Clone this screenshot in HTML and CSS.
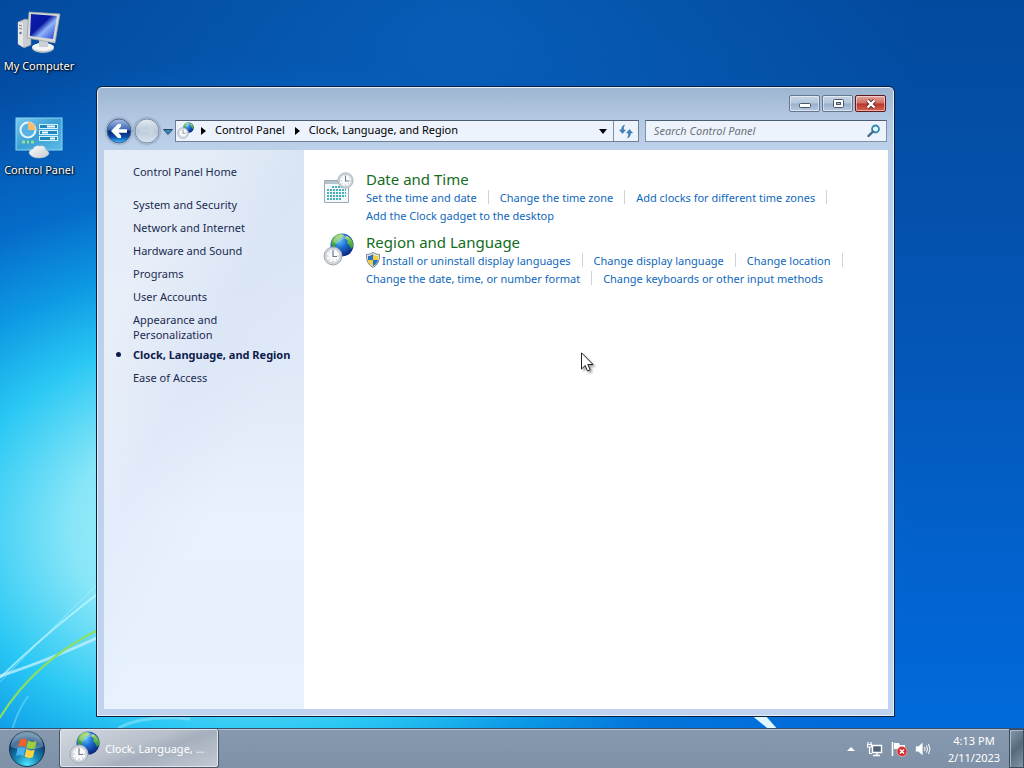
FILE: index.html
```
<!DOCTYPE html>
<html lang="en">
<head>
    <meta charset="UTF-8">
    <meta name="viewport" content="width=device-width, initial-scale=1.0">
    <title>Clock, Language, and Region</title>
    <link rel="stylesheet" href="styles.css">
</head>
<body>
    <!-- shared icons -->
    <svg class="sprite" aria-hidden="true">
        <defs>
            <radialGradient id="sea" cx="38%" cy="30%" r="75%">
                <stop offset="0" stop-color="#63c8fa"/>
                <stop offset="0.45" stop-color="#1c6cd0"/>
                <stop offset="1" stop-color="#0a1f78"/>
            </radialGradient>
            <linearGradient id="land" x1="0" y1="0" x2="0" y2="1">
                <stop offset="0" stop-color="#a4dc5c"/>
                <stop offset="1" stop-color="#1f8e3a"/>
            </linearGradient>
            <linearGradient id="silver" x1="0" y1="0" x2="1" y2="1">
                <stop offset="0" stop-color="#fff"/>
                <stop offset="1" stop-color="#c3cad0"/>
            </linearGradient>
            <linearGradient id="screen" x1="0" y1="0" x2="1" y2="1">
                <stop offset="0" stop-color="#0b1fae"/>
                <stop offset="0.42" stop-color="#0818a0"/>
                <stop offset="0.6" stop-color="#8fb4fa"/>
                <stop offset="1" stop-color="#2138c8"/>
            </linearGradient>
            <linearGradient id="orb-blue" x1="0" y1="0" x2="0" y2="1">
                <stop offset="0" stop-color="#a9bfe6"/>
                <stop offset="0.46" stop-color="#3864b4"/>
                <stop offset="0.5" stop-color="#06256f"/>
                <stop offset="0.75" stop-color="#0b4cae"/>
                <stop offset="1" stop-color="#3cc4ff"/>
            </linearGradient>
            <linearGradient id="orb-grey" x1="0" y1="0" x2="0" y2="1">
                <stop offset="0" stop-color="#e4ebf3"/>
                <stop offset="0.5" stop-color="#b9c7d7"/>
                <stop offset="1" stop-color="#dce6f1"/>
            </linearGradient>
            <linearGradient id="panel" x1="0" y1="0" x2="1" y2="1">
                <stop offset="0" stop-color="#79c9ee"/>
                <stop offset="0.5" stop-color="#3b9fd6"/>
                <stop offset="1" stop-color="#5dbbe4"/>
            </linearGradient>
            <radialGradient id="start" cx="50%" cy="95%" r="85%">
                <stop offset="0" stop-color="#52e6ff"/>
                <stop offset="0.4" stop-color="#1789b8"/>
                <stop offset="0.8" stop-color="#0d4274"/>
                <stop offset="1" stop-color="#49799b"/>
            </radialGradient>
        </defs>
        <symbol id="icon-clock" viewBox="0 0 20 20">
            <circle cx="10" cy="10" r="9" fill="#d3d9de" stroke="#a0a9b0"/>
            <circle cx="10" cy="10" r="7" fill="#f8fafb" stroke="#b4bcc3" stroke-width="0.7"/>
            <path d="M10 4v1.5M10 14.5V16M4 10h1.5M14.5 10H16M5.8 5.8l.8.8M13.4 13.4l.8.8M5.8 14.2l.8-.8" stroke="#98a2aa" stroke-width="0.8"/>
            <path d="M10 4.5V10.5H14" fill="none" stroke="#6c7a88" stroke-width="1.2"/>
        </symbol>
        <symbol id="icon-globe" viewBox="0 0 24 24">
            <circle cx="12" cy="12" r="11.5" fill="url(#sea)"/>
            <path d="M2 7Q5 1 11 1L14 2L12 5L9 5.5L9 8L6 10L6 13L4 15Q0 11 2 7Z" fill="url(#land)"/>
            <path d="M17 3L20 5Q24 9 23 14L21 16L19 12L17 10L18 8L15 5Z" fill="url(#land)"/>
            <path d="M3 8Q6 2 12 2Q17 2 19 5Q12 5 6 11Z" fill="#fff" opacity="0.3"/>
        </symbol>
        <symbol id="icon-region" viewBox="0 0 32 34">
            <use href="#icon-globe" x="7" y="0" width="24" height="24"/>
            <use href="#icon-clock" x="0" y="13" width="20" height="20"/>
        </symbol>
    </svg>

    <main class="desktop">
        <svg class="wallpaper" viewBox="0 0 1024 768" preserveAspectRatio="none" aria-hidden="true">
            <g fill="none">
                <path d="M0 678Q40 638 100 592" stroke="#c8f6ff" stroke-width="2" opacity="0.7"/>
                <path d="M0 682Q50 630 110 572" stroke="#b4f2ff" stroke-width="1" opacity="0.6"/>
                <path d="M0 676Q50 660 110 632" stroke="#d0f4ff" stroke-width="3" opacity="0.7"/>
                <path d="M-4 724Q32 662 100 629" stroke="#8be060" stroke-width="2"/>
                <path d="M10 740Q14 716 28 696" stroke="#9ceaff" stroke-width="2" opacity="0.4"/>
                <path d="M118 728Q145 714 190 719" stroke="#8be3f8" stroke-width="3" opacity="0.6"/>
            </g>
            <path d="M750 714L764 714L780 732L772 732Z" fill="#e0f7ff"/>
        </svg>

        <nav class="shortcuts">
            <a class="shortcut" href="#">
                <svg width="48" height="48" viewBox="0 0 48 48">
                    <path d="M3 14L10 11L16 12V37L9 40L3 36Z" fill="#c9ced2" stroke="#858d94" stroke-width="0.7"/>
                    <path d="M3 14L8 15V39L3 36Z" fill="#e4e6e8"/>
                    <path d="M4 17l3 1M4 20l3 1" stroke="#707b84"/>
                    <circle cx="5.5" cy="25" r="1.2" fill="#527c9c"/>
                    <ellipse cx="28" cy="40" rx="11" ry="5" fill="#b9c2c9"/>
                    <ellipse cx="28" cy="39" rx="11" ry="4" fill="#f2f4f5"/>
                    <path d="M24 31L33 32V39H24Z" fill="#cbd1d6"/>
                    <path d="M14 4L45 6L40 35L12 30Z" fill="#d8dad8" stroke="#9ba1a5" stroke-width="0.8"/>
                    <path d="M16 6L42 8L38 31L15 28Z" fill="url(#screen)"/>
                </svg>
                <span>My Computer</span>
            </a>
            <a class="shortcut" href="#">
                <svg width="48" height="48" viewBox="0 0 48 48">
                    <rect x="1" y="6" width="46" height="32" fill="url(#panel)" stroke="#8fd8f2"/>
                    <circle cx="13" cy="18" r="7.5" fill="#58b2e4" stroke="#e6f7ff" stroke-width="2"/>
                    <path d="M13 18V10A8 8 0 0 1 21 18Z" fill="#f2bd70"/>
                    <path d="M7 30h3M12 30h2M16 30h3" stroke="#8ee090" stroke-width="3"/>
                    <g fill="#2286be" stroke="#d2f3ff">
                        <rect x="24.5" y="12.5" width="18" height="4"/>
                        <rect x="24.5" y="18.5" width="18" height="4"/>
                        <rect x="24.5" y="24.5" width="18" height="4"/>
                    </g>
                    <path d="M32 14.5h8M27 20.5h6M35 26.5h5" stroke="#effcff" stroke-width="2"/>
                    <path d="M14 41Q14 38 18 37Q20 33 25 34Q30 33 31 38Q34 39 34 42Q31 46 24 46Q16 46 14 41Z" fill="url(#silver)" stroke="#b4bec7" stroke-width="0.5"/>
                </svg>
                <span>Control Panel</span>
            </a>
        </nav>

        <section class="window">
            <header class="titlebar">
                <button class="caption-btn" aria-label="Minimize">
                    <svg width="14" height="12" viewBox="0 0 14 12"><rect x="1.5" y="5.5" width="11" height="4" rx="1" fill="#fff" stroke="#4a5665"/></svg>
                </button>
                <button class="caption-btn" aria-label="Maximize">
                    <svg width="14" height="12" viewBox="0 0 14 12"><rect x="2.5" y="1.5" width="10" height="8" rx="1" fill="#fff" stroke="#4a5665"/><rect x="5.5" y="4.5" width="4" height="2" fill="#a9bdd8" stroke="#4a5665"/></svg>
                </button>
                <button class="caption-btn close" aria-label="Close">
                    <svg width="14" height="12" viewBox="0 0 14 12"><path d="M3.5 2.5L10.5 9.5M10.5 2.5L3.5 9.5" stroke="#5f2a2c" stroke-width="4"/><path d="M3.5 2.5L10.5 9.5M10.5 2.5L3.5 9.5" stroke="#fff" stroke-width="2.4"/></svg>
                </button>
            </header>

            <div class="navbar">
                <div class="travel">
                    <button class="round" aria-label="Back">
                        <svg width="26" height="26" viewBox="0 0 26 26">
                            <circle cx="13" cy="13" r="12" fill="url(#orb-blue)" stroke="#4d6387"/>
                            <path d="M5 13L12 6H15V8.5L12.5 11.2H21V14.8H12.5L15 17.5V20H12Z" fill="#fff"/>
                        </svg>
                    </button>
                    <button class="round" aria-label="Forward">
                        <svg width="26" height="26" viewBox="0 0 26 26">
                            <circle cx="13" cy="13" r="12" fill="url(#orb-grey)" stroke="#7c8ba0"/>
                            <path d="M21 13L15 8V11.5H6V14.5H15V18Z" fill="#d8e1eb" opacity="0.4"/>
                        </svg>
                    </button>
                    <button class="recent" aria-label="Recent pages">
                        <svg width="10" height="6" viewBox="0 0 10 6"><path d="M0.5 0.5H9.5L5 5.5Z" fill="#3a86b4" stroke="#234766"/></svg>
                    </button>
                </div>
                <div class="address">
                    <svg class="address-icon" width="18" height="18" viewBox="0 0 18 18">
                        <use href="#icon-globe" x="6" y="0" width="11" height="11"/>
                        <use href="#icon-clock" x="0" y="5" width="12" height="12"/>
                    </svg>
                    <svg class="crumb-arrow" width="5" height="8" viewBox="0 0 5 8"><path d="M0 0L5 4L0 8Z"/></svg>
                    <a href="#">Control Panel</a>
                    <svg class="crumb-arrow" width="5" height="8" viewBox="0 0 5 8"><path d="M0 0L5 4L0 8Z"/></svg>
                    <a href="#">Clock, Language, and Region</a>
                    <button class="history" aria-label="Previous locations">
                        <svg width="8" height="5" viewBox="0 0 8 5"><path d="M0 0H8L4 5Z"/></svg>
                    </button>
                    <button class="refresh" aria-label="Refresh">
                        <svg width="16" height="16" viewBox="0 0 16 16">
                            <path d="M6.5 2Q3.5 3 3.5 7H1.5L4.5 10.5L7.5 7H5.5Q5 4 6.5 2Z" fill="#3f86c0" stroke="#2a6699" stroke-width="0.5"/>
                            <path d="M9.5 15Q12.5 14 12.5 10H14.5L11.5 6.5L8.5 10H10.5Q11 13 9.5 15Z" fill="#3f86c0" stroke="#2a6699" stroke-width="0.5"/>
                        </svg>
                    </button>
                </div>
                <form class="search">
                    <input type="search" aria-label="Search Control Panel" placeholder="Search Control Panel">
                    <button type="button" aria-label="Search">
                        <svg width="14" height="14" viewBox="0 0 14 14"><circle cx="8.5" cy="5" r="3.5" fill="#e7f6fc" stroke="#3488ae" stroke-width="1.8"/><path d="M6 7.5L1.5 12" stroke="#42698e" stroke-width="2.4" stroke-linecap="round"/></svg>
                    </button>
                </form>
            </div>

            <div class="client">
                <nav class="sidebar">
                    <a class="home" href="#">Control Panel Home</a>
                    <a href="#">System and Security</a>
                    <a href="#">Network and Internet</a>
                    <a href="#">Hardware and Sound</a>
                    <a href="#">Programs</a>
                    <a href="#">User Accounts</a>
                    <a href="#">Appearance and<br>Personalization</a>
                    <a class="current" href="#">Clock, Language, and Region</a>
                    <a href="#">Ease of Access</a>
                </nav>

                <div class="content">
                    <section class="category">
                        <svg width="32" height="34" viewBox="0 0 32 34">
                            <path d="M1.5 10.5H25.5V32.5H1.5Z" fill="#f4f8fa" stroke="#9caab3"/>
                            <path d="M2 11H25V14H2Z" fill="#b6c3cb"/>
                            <path d="M9 17H23M4 20H23M4 23H23M4 26H23M4 29H18" stroke="#45b0b8" stroke-width="2" stroke-dasharray="2 1"/>
                            <use href="#icon-clock" x="14" y="2" width="17" height="17"/>
                        </svg>
                        <div class="tasks">
                            <h2><a href="#">Date and Time</a></h2>
                            <ul>
                                <li><a href="#">Set the time and date</a></li>
                                <li><a href="#">Change the time zone</a></li>
                                <li><a href="#">Add clocks for different time zones</a></li>
                                <li class="last"><a href="#">Add the Clock gadget to the desktop</a></li>
                            </ul>
                        </div>
                    </section>
                    <section class="category">
                        <svg width="32" height="34"><use href="#icon-region" width="32" height="34"/></svg>
                        <div class="tasks">
                            <h2><a href="#">Region and Language</a></h2>
                            <ul>
                                <li>
                                    <svg class="shield" width="14" height="16" viewBox="0 0 14 16">
                                        <path d="M7 0.5Q10 2.5 13.5 2.5Q14 12 7 15.5Q0 12 0.5 2.5Q4 2.5 7 0.5Z" fill="#e9edf0" stroke="#7b8791"/>
                                        <path d="M7 2V8H2V4Q5 4 7 2Z" fill="#2874c4"/>
                                        <path d="M7 2Q9 4 12 4V8H7Z" fill="#f5cf38"/>
                                        <path d="M2 8H7V14Q2.5 12 2 8Z" fill="#f5cf38"/>
                                        <path d="M7 8H12Q11.5 12 7 14Z" fill="#2874c4"/>
                                    </svg>
                                    <a href="#">Install or uninstall display languages</a>
                                </li>
                                <li><a href="#">Change display language</a></li>
                                <li><a href="#">Change location</a></li>
                                <li><a href="#">Change the date, time, or number format</a></li>
                                <li class="last"><a href="#">Change keyboards or other input methods</a></li>
                            </ul>
                        </div>
                    </section>
                </div>
            </div>
        </section>
    </main>

    <footer class="taskbar">
        <button class="start" aria-label="Start">
            <svg width="38" height="38" viewBox="0 0 38 38">
                <circle cx="19" cy="19" r="17.5" fill="url(#start)" stroke="#17344e"/>
                <path d="M3 17A16 16 0 0 1 35 17Q19 23 3 17Z" fill="#fff" opacity="0.25"/>
                <path d="M12 10Q15 7.5 19 10L17.5 17Q13.5 15 10 17Z" fill="#f0612c"/>
                <path d="M20 10.5Q24 13 28.5 11L27 18Q23 20 18.5 17.5Z" fill="#9bd03c"/>
                <path d="M9.5 18.5Q13 16.5 17.2 18.5L15.7 26Q11.5 24 8 26Z" fill="#47b2f0"/>
                <path d="M18.2 19Q22.5 21.5 26.7 19.5L25 27Q21 29 16.7 26.5Z" fill="#ffd340"/>
            </svg>
        </button>
        <button class="task">
            <svg width="32" height="34"><use href="#icon-region" width="32" height="34"/></svg>
            <span>Clock, Language, ...</span>
        </button>
        <div class="tray">
            <button aria-label="Show hidden icons">
                <svg width="8" height="4" viewBox="0 0 8 4"><path d="M0 4L4 0L8 4Z" fill="#fff"/></svg>
            </button>
            <button aria-label="Network">
                <svg width="16" height="16" viewBox="0 0 16 16">
                    <path d="M5.5 4.5H14.5V11.5H5.5ZM10 12V14M6 14.5H13" fill="#52647a" stroke="#fff" stroke-width="1.4"/>
                    <path d="M1 1V3M4 1V3M0.5 3.5H4.5V6H0.5ZM2.5 6V12.5H5" fill="none" stroke="#fff" stroke-width="1.2"/>
                </svg>
            </button>
            <button aria-label="Action Center">
                <svg width="16" height="16" viewBox="0 0 16 16">
                    <path d="M1.5 1V15" stroke="#fff" stroke-width="1.6"/>
                    <path d="M3 2H8L9 4H14V9H8L7 8H3Z" fill="#fff"/>
                    <circle cx="11" cy="10.5" r="5" fill="#d52a2c" stroke="#f3b6b0" stroke-width="0.8"/>
                    <path d="M9 8.5L13 12.5M13 8.5L9 12.5" stroke="#fff" stroke-width="1.6"/>
                </svg>
            </button>
            <button aria-label="Volume">
                <svg width="16" height="16" viewBox="0 0 16 16">
                    <path d="M1 5.5H3.5L7.5 2V14L3.5 10.5H1Z" fill="#fff" stroke="#d9e1e9" stroke-width="0.5"/>
                    <path d="M9.5 6Q10.8 8 9.5 10M11.5 4.5Q13.5 8 11.5 11.5M13.5 3Q16.5 8 13.5 13" fill="none" stroke="#fff"/>
                </svg>
            </button>
        </div>
        <time class="clock" datetime="2023-02-11T16:13">4:13 PM<br>2/11/2023</time>
        <button class="show-desktop" aria-label="Show desktop"></button>
    </footer>

    <svg class="cursor" width="14" height="21" viewBox="0 0 14 21" aria-hidden="true">
        <path d="M0.5 0.8V17L4.2 13.5L6.5 19L9.2 17.8L6.8 12.5H12Z" fill="#fff" stroke="#222"/>
    </svg>
</body>
</html>
```
FILE: styles.css
```
* {
    margin: 0;
    padding: 0;
    box-sizing: border-box;
}

body {
    font-family: 'Noto Sans', 'Open Sans', sans-serif;
    font-size: 11px;
    line-height: 15px;
    height: 100vh;
    display: flex;
    flex-direction: column;
    overflow: hidden;
    color: #000;
}

a {
    color: inherit;
    text-decoration: none;
}

a:hover {
    text-decoration: underline;
}

button {
    border: none;
    background: none;
    font: inherit;
    display: flex;
    align-items: center;
    justify-content: center;
}

svg {
    display: block;
    flex: none;
}

.sprite {
    position: absolute;
    width: 0;
    height: 0;
}

/* Desktop */

.desktop {
    position: relative;
    flex: 1;
    background:
        radial-gradient(ellipse 50% 50% at 24% 73%, #b8f2fa 0%, #88e6f8 34%, #2ac8f4 56%, rgba(14, 160, 232, 0.9) 74%, rgba(6, 125, 220, 0.6) 94%, rgba(0, 100, 210, 0) 130%),
        radial-gradient(ellipse 45% 40% at 45% 5%, rgba(10, 108, 200, 0.55) 0%, rgba(10, 108, 200, 0) 100%),
        linear-gradient(180deg, #034a9f 0%, #0450aa 25%, #0457b8 50%, #0265d3 85%, #006ada 100%);
}

.wallpaper {
    position: absolute;
    width: 100vw;
    height: 100vh;
}

.shortcuts {
    position: relative;
    width: 78px;
    padding-top: 8px;
    display: flex;
    flex-direction: column;
    gap: 38px;
}

.shortcut {
    display: flex;
    flex-direction: column;
    align-items: center;
    gap: 2px;
    line-height: 16px;
    color: #fff;
    white-space: nowrap;
    text-shadow: 1px 1px 2px #000, 0 0 2px #000;
}

/* Window */

.window {
    position: absolute;
    top: 86px;
    right: 129px;
    bottom: 11px;
    left: 96px;
    display: flex;
    flex-direction: column;
    padding: 0 6px 7px 7px;
    border: 1px solid #0b1f3c;
    border-radius: 6px 6px 0 0;
    box-shadow: inset 0 0 0 1px #e4effb;
    background: linear-gradient(180deg, #9db5d0 0, #b2c7e1 30px, #bcd0e9 60px, #b9d1ec 120px, #bfd3ee 100%);
}

.titlebar {
    display: flex;
    justify-content: flex-end;
    gap: 2px;
    height: 31px;
    padding: 8px 2px 6px 0;
}

.caption-btn {
    width: 31px;
    height: 17px;
    border: 1px solid #65778f;
    border-radius: 2px;
    box-shadow: inset 0 0 0 1px rgba(255, 255, 255, 0.5);
    background: linear-gradient(180deg, #c6d4e5 0%, #b4c6db 48%, #98aec9 52%, #b7cae3 100%);
}

.caption-btn.close {
    border-color: #62191e;
    background: linear-gradient(180deg, #e3a49a 0%, #cf6e63 48%, #b8352b 52%, #d4674f 100%);
}

.navbar {
    display: flex;
    align-items: center;
    height: 32px;
    padding: 0 1px 6px 2px;
}

.travel {
    display: flex;
    align-items: center;
    gap: 2px;
    margin-right: 2px;
}

.round {
    border-radius: 50%;
    box-shadow: 0 0 2px #5b6f8d;
}

.recent {
    padding: 4px 0 2px 1px;
}

.address {
    flex: 25;
    display: flex;
    align-items: center;
    height: 22px;
    border: 1px solid #6e8197;
    border-top-color: #4b5c73;
    background: #ecf3fc;
    line-height: 20px;
    white-space: nowrap;
}

.address-icon {
    margin: 0 6px 0 1px;
}

.crumb-arrow {
    margin-right: 9px;
}

.address a {
    height: 22px;
    margin-right: 10px;
}

.history {
    width: 20px;
    height: 20px;
    margin-left: auto;
}

.refresh {
    width: 25px;
    height: 20px;
    border-left: 1px solid #7f91a6;
}

.search {
    flex: 13;
    display: flex;
    align-items: center;
    height: 22px;
    margin-left: 6px;
    border: 1px solid #7f91a6;
    border-top-color: #4b5c73;
    background: #ecf3fc;
}

.search input {
    flex: 1;
    min-width: 0;
    padding: 0 0 2px 8px;
    border: none;
    outline: none;
    background: none;
    font: italic 11px/15px 'Noto Sans', 'Open Sans', sans-serif;
}

.search input::placeholder {
    color: #6d7379;
}

.search button {
    width: 24px;
    height: 20px;
}

.client {
    flex: 1;
    display: flex;
    min-height: 0;
    background: #fff;
}

.sidebar {
    flex: none;
    width: 200px;
    padding: 14px 0 0 29px;
    display: flex;
    flex-direction: column;
    gap: 5px;
    color: #1a2b50;
    background:
        linear-gradient(118deg, rgba(255, 255, 255, 0.3) 20%, rgba(214, 224, 244, 0.3) 42%, rgba(255, 255, 255, 0) 60%),
        linear-gradient(180deg, #d9e5f4 0%, #e0e9f7 40%, #e8f1fd 65%, #e7f2fe 100%);
}

.sidebar a {
    min-height: 18px;
}

.sidebar .home {
    margin-bottom: 10px;
}

.sidebar .current {
    position: relative;
    font-weight: bold;
    color: #0d1b4b;
    white-space: nowrap;
}

.sidebar .current::before {
    content: '';
    position: absolute;
    left: -17px;
    top: 5px;
    width: 5px;
    height: 5px;
    border-radius: 50%;
    background: #0d1b4b;
}

/* Categories */

.content {
    flex: 1;
    padding: 20px 19px;
    display: flex;
    flex-direction: column;
    gap: 9px;
}

.category {
    display: flex;
    gap: 11px;
}

.category h2 {
    font-size: 15px;
    font-weight: normal;
    line-height: 18px;
    color: #146c1c;
}

.category ul {
    display: flex;
    flex-wrap: wrap;
    list-style: none;
    color: #0f68bc;
}

.category li {
    display: flex;
    align-items: center;
    height: 18px;
    white-space: nowrap;
}

.category li::after {
    content: '';
    width: 1px;
    height: 14px;
    margin: 0 11px;
    background: #cfd3d6;
}

.category li.last::after {
    display: none;
}

.shield {
    margin-right: 2px;
}

/* Taskbar */

.taskbar {
    position: relative;
    display: flex;
    align-items: stretch;
    height: 40px;
    border-top: 1px solid #35506e;
    box-shadow: inset 0 1px 0 #b5c3d3;
    background: linear-gradient(180deg, #8799ae 0%, #7f91a7 100%);
    color: #fff;
}

.start {
    width: 54px;
}

.task {
    width: 160px;
    margin-left: 5px;
    padding-left: 9px;
    justify-content: flex-start;
    gap: 4px;
    border: 1px solid #47566a;
    border-top: none;
    border-radius: 3px;
    box-shadow: inset 0 0 0 1px #e3e8ef;
    background: linear-gradient(160deg, #d3d8df 0%, #b8c0cb 45%, #a5afbd 60%, #c2c9d3 100%);
    color: #fff;
    white-space: nowrap;
}

.tray {
    display: flex;
    align-items: center;
    gap: 8px;
    margin-left: auto;
}

.tray button:first-child {
    margin-right: 4px;
}

.clock {
    width: 70px;
    margin-left: 8px;
    padding-top: 3px;
    line-height: 17px;
    text-align: center;
}

.show-desktop {
    width: 15px;
    border: 1px solid #3c4d60;
    box-shadow: inset 1px 1px 0 #a9b7c6;
    background: linear-gradient(135deg, #8799ad 0%, #56687c 50%, #8294a8 100%);
}

.cursor {
    position: absolute;
    left: 581px;
    top: 352px;
    filter: drop-shadow(2px 2px 1px rgba(0, 0, 0, 0.35));
}
```
